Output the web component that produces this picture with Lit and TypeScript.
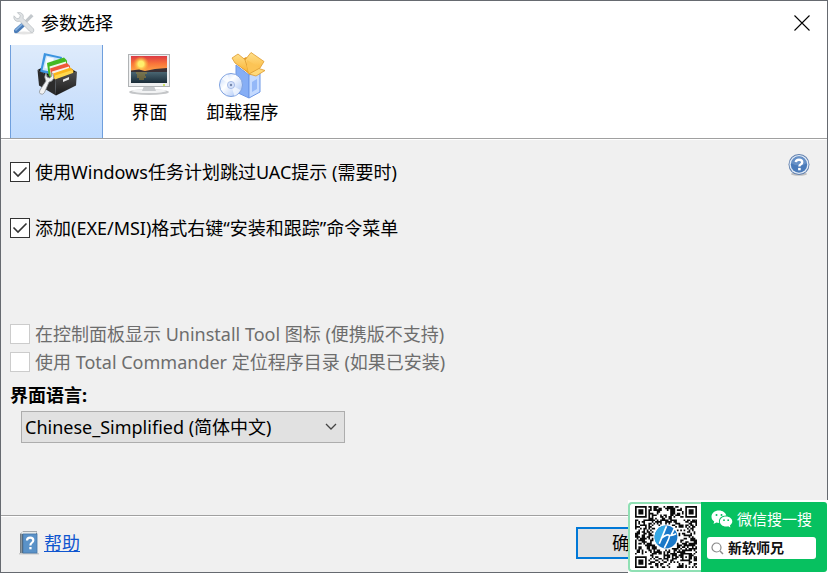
import { LitElement, html, css } from "lit";
import { customElement, state, property } from "lit/decorators.js";
import { classMap } from "lit/directives/class-map.js";

const toolsIcon = html`<svg width="24" height="24" viewBox="0 0 24 24" aria-hidden="true">
  <ellipse cx="12" cy="22" rx="10" ry="1.5" fill="#e4e4e4" />
  <path d="M19 3 L21.5 5.2 L12.5 14 L10.5 12 Z" fill="#c3c8cc" />
  <path d="M9.5 12 L12.8 15.2 L6 21.5 Q3.6 22.8 2.2 21.4 Q1.2 19.6 3 17.8 Z" fill="#4a7cb8" />
  <path d="M9.5 12.5 L10.8 13.8 L4 20 L2.8 19Z" fill="#86b2e0" />
  <path
    d="M2 4.8 L5 7.8 L7.6 7 L8.2 4.5 L5.4 1.6 Q9 .8 10.8 3.4 Q11.8 5.2 11 7.2 L21.6 18 Q22.6 20.6 20.6 21.4 Q19 21.8 17.8 20.4 L7.8 10.2 Q5 11.2 3 9.2 Q1.2 7.2 2 4.8Z"
    fill="#dfe2e4" stroke="#b4babe" stroke-width=".7" />
</svg>`;

const generalIcon = html`<svg width="48" height="48" viewBox="0 0 48 48" aria-hidden="true">
  <defs>
    <linearGradient id="box" x1="0" y1="0" x2="0" y2="1">
      <stop offset="0" stop-color="#505050" /><stop offset="1" stop-color="#1b1b1b" />
    </linearGradient>
  </defs>
  <path d="M4.500 19 L10 16 L34 15 L43.500 21 L22 29 Z" fill="#161616" />
  <path d="M11 2 L29 6 L26 25 L7 21 Z" fill="#3c94e0" />
  <path d="M13 4.500 L27 7.500 L24.500 22 L9.500 19 Z" fill="#cfe6fa" />
  <path d="M14 6 L21 7.500 L16 18 L11.500 17Z" fill="#fff" opacity=".85" />
  <path d="M14 12 L31 6.500 L34 9.500 L34 20 L16 27 Z" fill="#45b922" />
  <path d="M16.500 15.500 L33 10.500 L33.500 20 L18 26 Z" fill="#f0f6ea" />
  <path d="M17 17.500 L34 12 L37 15 L37 22 L19 28 Z" fill="#f0563a" />
  <path d="M19 20.500 L36 15.500 L37 22 L20 28 Z" fill="#f8f1ee" />
  <path d="M20 22.500 L37.500 16.500 L40.500 19.500 L40 23 L22 29 Z" fill="#fbb51a" />
  <path d="M22 24.500 L39.500 19 L40.500 22.500 L22 29 Z" fill="#ffd84e" />
  <path d="M4.500 19 L22 28.500 L23 44.500 L6 34.500 Z" fill="#2b2b2b" />
  <path d="M22 28.500 L44 20.500 L43 34.500 L23 44.500 Z" fill="url(#box)" />
  <path d="M30 28.500 L36 26 L36 28.500 L30 31 Z" fill="#e8e8e8" />
  <path
    d="M13 22 L14 26 L16.500 27 L19 25 L18.500 21.500 Q21.500 23.500 20.500 27.500 Q19.500 30.500 16 31 L11.500 41.500 Q10 44 7.500 43 Q5.500 41.500 7 39 L13 30 Q10.500 26 13 22Z"
    fill="#f1f2f3" stroke="#8d9295" stroke-width=".8" />
</svg>`;

const displayIcon = html`<svg width="48" height="48" viewBox="0 0 48 48" aria-hidden="true">
  <defs>
    <linearGradient id="sky" x1="0" y1="0" x2="0" y2="1">
      <stop offset="0" stop-color="#dc3a44" /><stop offset=".45" stop-color="#f9743a" />
      <stop offset="1" stop-color="#ffb04a" />
    </linearGradient>
    <linearGradient id="sea" x1="0" y1="0" x2="0" y2="1">
      <stop offset="0" stop-color="#4a6672" /><stop offset="1" stop-color="#1a2c38" />
    </linearGradient>
    <radialGradient id="sun">
      <stop offset=".35" stop-color="#ffee6c" /><stop offset="1" stop-color="#ffb42c" stop-opacity="0" />
    </radialGradient>
  </defs>
  <ellipse cx="23" cy="41" rx="20" ry="3" fill="#c4c6c8" />
  <ellipse cx="23" cy="40" rx="17" ry="2" fill="#f2f3f4" />
  <path d="M18 35 H28 L30 40 H16Z" fill="#c7cacd" />
  <rect x="2.500" y="3.500" width="41" height="32" fill="#eff0f1" stroke="#b0b3b5" />
  <rect x="5" y="5" width="36" height="17" fill="url(#sky)" />
  <circle cx="15" cy="13" r="8" fill="url(#sun)" />
  <path d="M5 19.500 L13 18.500 L19 20 L29 18 L41 17 V24 H5Z" fill="#3a3035" />
  <rect x="5" y="21" width="36" height="11" fill="url(#sea)" />
  <path d="M10 22 H21 M11 24 H19 M11 26 H20 M13 28 H18" stroke="#a78531" stroke-width="1" />
  <circle cx="38" cy="34" r="1" fill="#c4df3a" />
</svg>`;

const packageIcon = html`<svg width="48" height="48" viewBox="0 0 48 48" aria-hidden="true">
  <defs>
    <linearGradient id="flap" x1="0" y1="0" x2="0" y2="1">
      <stop offset="0" stop-color="#ffe08c" /><stop offset="1" stop-color="#f9b130" />
    </linearGradient>
    <linearGradient id="disc" x1="0" y1="0" x2="1" y2="1">
      <stop offset="0" stop-color="#b9d2fb" /><stop offset=".4" stop-color="#fff" />
      <stop offset="1" stop-color="#9cbcf5" />
    </linearGradient>
  </defs>
  <path d="M17 14 L30 24 V47 L17 41 Z" fill="#86aef5" stroke="#6d97e6" />
  <path d="M30 24 L41 18 V41 L30 47 Z" fill="#c4daff" stroke="#6d97e6" />
  <path d="M33 31 L38 28 V38 L33 41Z" fill="#94b8f8" />
  <path d="M17 12 L27 6 L41 15 L30 23 Z" fill="#e49a22" />
  <path d="M13 7 L19 3 L29 11 L30 22 L16 12 Z" fill="url(#flap)" stroke="#dd9a30" stroke-width=".8" />
  <path d="M26 9 L32 1.500 L45 10.500 L41 17 L30 23 L28 15 Z" fill="url(#flap)" stroke="#dd9a30" stroke-width=".8" />
  <path d="M28 9 L41 17 L30 23 L28 15Z" fill="#fbc456" />
  <path d="M30 23 L40 17.500 L46 19.500 L37 25 Z" fill="#ffd97a" stroke="#dd9a30" stroke-width=".8" />
  <circle cx="12" cy="34" r="11.500" fill="url(#disc)" stroke="#7da0df" />
  <path d="M12 34 L2.500 28 Q5.500 24 8.500 23.500Z M12 34 L21.500 39 Q19.500 43 15.500 45Z" fill="#fff" opacity=".65" />
  <circle cx="12" cy="34" r="3.600" fill="#d5e2fb" stroke="#92abde" stroke-width=".7" />
  <circle cx="12" cy="34" r="1.200" fill="#7486ab" />
</svg>`;

const questionIcon = html`<svg width="24" height="24" viewBox="0 0 24 24" aria-hidden="true">
  <ellipse cx="12" cy="21" rx="8" ry="1.800" fill="#c0c0c0" />
  <circle cx="12" cy="11.500" r="10.500" fill="#5f7fae" />
  <circle cx="12" cy="11.500" r="9.600" fill="#e3ecf7" />
  <circle cx="12" cy="11.500" r="8.200" fill="#4a7bba" />
  <path d="M4 10 A8.200 8.200 0 0 1 20 10 Q12 15 4 10Z" fill="#7ba0d0" opacity=".6" />
  <path d="M8.800 9.200 Q9 6.800 12 6.800 Q15.200 6.800 15.200 9.200 Q15.200 10.700 13.600 11.500 Q12.400 12.100 12.400 13.500" fill="none" stroke="#fff" stroke-width="2.400" />
  <rect x="11.100" y="14.900" width="2.600" height="2.400" fill="#fff" />
</svg>`;

const bookIcon = html`<svg width="20" height="24" viewBox="0 0 20 24" aria-hidden="true">
  <rect x="0" y="22" width="20" height="1.500" fill="#c9c9c9" />
  <path d="M1 3 L4 0.500 H18 V22 H1Z" fill="#59636b" />
  <path d="M3 1 H18 L17 3 H2Z" fill="#e6eaea" />
  <rect x="4" y="3" width="14" height="19" fill="#5a92c8" stroke="#4476a8" stroke-width=".8" />
  <rect x="1.500" y="3" width="1.500" height="19" fill="#8b969d" />
  <path d="M8 9.500 Q8 6.700 11.200 6.700 Q14.300 6.700 14.300 9.300 Q14.300 11 12.700 11.900 Q11.400 12.700 11.400 14.600" fill="none" stroke="#fff" stroke-width="2.200" />
  <rect x="10.300" y="16" width="2.300" height="2.300" fill="#fff" />
</svg>`;

const wechatIcon = html`<svg width="22" height="18" viewBox="0 0 22 18" aria-hidden="true">
  <path d="M8 .5 C3.600 .5 .5 3.200 .5 6.700 C.5 8.700 1.500 10.300 3.200 11.500 L2.500 14 L5.400 12.500 Q6.700 12.900 8.200 12.900 C7 8.600 10.600 5.400 15.300 5.500 C14.700 2.700 11.700 .5 8 .5Z" fill="#fff" />
  <path d="M15 6.500 C11.400 6.500 8.900 8.800 8.900 11.600 C8.900 14.400 11.400 16.600 15 16.600 Q16.200 16.600 17.200 16.300 L19.400 17.500 L18.900 15.400 C20.400 14.400 21.300 13.100 21.300 11.600 C21.300 8.800 18.600 6.500 15 6.500Z" fill="#fff" />
  <g fill="#07c160"><circle cx="5.500" cy="4.900" r="1" /><circle cx="10.500" cy="4.900" r="1" />
  <circle cx="13" cy="10.200" r=".9" /><circle cx="17.200" cy="10.200" r=".9" /></g>
</svg>`;

const QR = 37;

function qrModules(): string {
  const corners = [[0, 0], [QR - 7, 0], [0, QR - 7]];
  let seed = 20177;
  let d = "";
  for (let y = 0; y < QR; y++) {
    for (let x = 0; x < QR; x++) {
      seed = (seed * 1103515245 + 12345) % 2147483648;
      let on = seed / 2147483648 < 0.52;
      for (const [cx, cy] of corners) {
        const r = Math.max(Math.abs(x - cx - 3), Math.abs(y - cy - 3));
        if (r <= 4) on = r === 3 || r <= 1;
      }
      const align = Math.max(Math.abs(x - 30), Math.abs(y - 30));
      if (align <= 2) on = align !== 1;
      if (Math.hypot(x - 18, y - 18) < 8) on = false;
      if (on) d += `M${x} ${y}h1v1h-1z`;
    }
  }
  return d;
}

@customElement("qr-card")
export class QrCard extends LitElement {
  static styles = css`
    :host { display: flex; height: 73px; width: 200px; background: #fff; }
    * { box-sizing: border-box; }
    .code {
      flex: 0 0 73px; margin: 2px 0 1px; border: 2px solid #8fe0b4; border-right: 0;
      border-radius: 4px 0 0 4px; display: grid; place-items: center;
    }
    .search {
      flex: 1; min-width: 0; margin: 2px 1px 1px 0; background: #07c160; border-radius: 0 3px 3px 0;
      padding: 6px 11px 0 6px; display: flex; flex-direction: column; gap: 7px;
    }
    .head {
      display: flex; align-items: center; gap: 4px; padding-left: 4px; height: 22px;
      color: #fff; font-size: 15px; white-space: nowrap;
    }
    .field {
      display: flex; align-items: center; gap: 4px; height: 22px; padding: 0 4px;
      background: #fff; border-radius: 3px;
    }
    .field svg { flex: none; }
    .query {
      flex: 1; min-width: 0; border: 0; padding: 0; background: none; color: #111;
      font: bold 14px/20px "Noto Sans", "Noto Sans CJK SC", sans-serif; outline: none;
    }
  `;

  render() {
    return html`
      <div class="code">
        <svg width="62" height="62" viewBox="0 0 ${QR} ${QR}" role="img" aria-label="微信二维码">
          <path d=${qrModules()} fill="#0a0a0a" />
          <circle cx="18.500" cy="18.500" r="6.800" fill="#1b78c8" />
          <path d="M18.500 11.700 A6.800 6.800 0 0 0 13.500 23.100 L17.500 15Z" fill="#35a8e4" />
          <path d="M18.800 12 L14.500 22.500 M15.500 19.500 Q19 16.500 20.500 17.500 Q21 18.500 17.500 25 M23.500 13.500 L21.500 17.500 Q22.500 17.500 24.500 16.500" stroke="#fff" stroke-width="1" fill="none" />
        </svg>
      </div>
      <div class="search">
        <div class="head">${wechatIcon}<span>微信搜一搜</span></div>
        <label class="field">
          <svg width="13" height="13" viewBox="0 0 13 13" aria-hidden="true">
            <circle cx="5.500" cy="5.500" r="4.500" fill="none" stroke="#888" stroke-width="1.200" />
            <path d="M9 9 L12 12" stroke="#888" stroke-width="1.400" />
          </svg>
          <input class="query" aria-label="搜索" .value=${"新软师兄"} />
        </label>
      </div>
    `;
  }
}

@customElement("option-check")
export class OptionCheck extends LitElement {
  @property() label = "";
  @property({ type: Boolean }) checked = false;
  @property({ type: Boolean }) disabled = false;

  static styles = css`
    :host { display: block; }
    .row { display: flex; align-items: center; gap: 5px; min-height: 28px; }
    .mark { display: grid; place-items: center; flex: none; }
    .box {
      grid-area: 1 / 1; appearance: none; width: 20px; height: 20px; margin: 0;
      box-sizing: border-box; border: 1px solid #333; background: #fff;
    }
    .tick { grid-area: 1 / 1; display: none; pointer-events: none; z-index: 1; }
    .box:checked + .tick { display: block; }
    .box:disabled { border-color: #ccc; }
    .off { color: #6d6d6d; }
  `;

  render() {
    return html`<label class=${classMap({ row: true, off: this.disabled })}>
      <span class="mark">
        <input class="box" type="checkbox" .checked=${this.checked} ?disabled=${this.disabled} />
        <svg class="tick" width="16" height="12" viewBox="0 0 16 12" aria-hidden="true">
          <path d="M1.500 5.500 L6 10 L14.500 1.500" fill="none" stroke="#333" stroke-width="1.600" />
        </svg>
      </span>
      <span>${this.label}</span>
    </label>`;
  }
}

@customElement("app-root")
export class AppRoot extends LitElement {
  @state() private tab = 0;

  private tabs = [
    { name: "常规", icon: generalIcon },
    { name: "界面", icon: displayIcon },
    { name: "卸载程序", icon: packageIcon },
  ];

  static styles = css`
    :host {
      display: flex; flex-direction: column; position: relative; box-sizing: border-box;
      min-height: 100vh; border: 1px solid #666a70; background: #f0f0f0; color: #000;
      font: 18px/24px "Noto Sans", "Noto Sans CJK SC", sans-serif;
    }
    * { box-sizing: border-box; }
    svg { display: block; flex: none; }
    .titlebar {
      display: flex; align-items: center; gap: 5px; height: 44px; padding: 0 17px 0 11px;
      background: #fff;
    }
    .title { flex: 1; margin: 0; font-size: 18px; font-weight: inherit; }
    .plain { padding: 0; border: 0; background: none; color: inherit; font: inherit; }
    .tabs {
      display: flex; padding: 0 9px; background: #fff; border-bottom: 1px solid #a0a0a0;
    }
    .tab {
      display: flex; flex-direction: column; align-items: center; gap: 1px; width: 93px;
      height: 93px; padding: 6px 0 0; border: solid transparent; border-width: 0 1px;
      background: none; color: inherit; font: inherit; white-space: nowrap;
    }
    .tab.active {
      border-color: #6f9fdd; background: linear-gradient(#deebfb, #cfe2fb 50%, #bfdbfe);
    }
    .panel {
      flex: 1; display: flex; align-items: flex-start; justify-content: space-between;
      padding: 18px 16px 16px 9px; border-top: 1px solid #fff;
    }
    .options { display: flex; flex-direction: column; }
    .group { display: flex; flex-direction: column; gap: 28px; margin-bottom: 78px; }
    .caption { margin-top: 7px; font-weight: 700; }
    .picker {
      display: grid; align-items: center; width: 324px; margin: 4px 0 0 11px;
    }
    .language {
      grid-area: 1 / 1; appearance: none; height: 32px; padding: 0 32px 0 3px; border: 1px solid #adadad;
      border-radius: 0; background: #e1e1e1; color: inherit; font: inherit;
    }
    .chevron { grid-area: 1 / 1; justify-self: end; margin-right: 8px; pointer-events: none; }
    .help { margin-top: -5px; }
    .footer {
      display: flex; align-items: center; justify-content: space-between; height: 57px;
      padding: 0 143px 2px 18px; border-top: 1px solid #a0a0a0; box-shadow: inset 0 1px #fff;
    }
    .link { display: flex; align-items: center; gap: 5px; color: #0f55cf; }
    .ok {
      width: 108px; height: 32px; padding: 0; border: 2px solid #0078d7; background: #e1e1e1;
      color: inherit; font: inherit;
    }
    .card { position: absolute; right: -1px; bottom: -1px; }
  `;

  render() {
    return html`
      <header class="titlebar">
        ${toolsIcon}
        <h1 class="title">参数选择</h1>
        <button class="plain" aria-label="关闭">
          <svg width="16" height="16" viewBox="0 0 16 16">
            <path d="M.5 .5 L15.500 15.500 M15.500 .5 L.5 15.500" stroke="#000" stroke-width="1.100" />
          </svg>
        </button>
      </header>
      <nav class="tabs" role="tablist">
        ${this.tabs.map(
          (t, i) => html`<button
            class=${classMap({ tab: true, active: i === this.tab })}
            role="tab"
            aria-selected=${i === this.tab}
            @click=${() => (this.tab = i)}
          >${t.icon}<span>${t.name}</span></button>`
        )}
      </nav>
      <main class="panel">
        <div class="options">
          <div class="group">
            <option-check checked label="使用Windows任务计划跳过UAC提示 (需要时)"></option-check>
            <option-check checked label="添加(EXE/MSI)格式右键“安装和跟踪”命令菜单"></option-check>
          </div>
          <option-check disabled label="在控制面板显示 Uninstall Tool 图标 (便携版不支持)"></option-check>
          <option-check disabled label="使用 Total Commander 定位程序目录 (如果已安装)"></option-check>
          <label class="caption" for="language">界面语言:</label>
          <div class="picker">
            <select class="language" id="language">
              <option>Chinese_Simplified (简体中文)</option>
            </select>
            <svg class="chevron" width="12" height="8" viewBox="0 0 12 8" aria-hidden="true">
              <path d="M1 1 L6 6 L11 1" fill="none" stroke="#444" stroke-width="1.300" />
            </svg>
          </div>
        </div>
        <button class="plain help" aria-label="帮助">${questionIcon}</button>
      </main>
      <footer class="footer">
        <a class="link" href="#help">${bookIcon}<span>帮助</span></a>
        <button class="ok">确定</button>
      </footer>
      <qr-card class="card"></qr-card>
    `;
  }
}
